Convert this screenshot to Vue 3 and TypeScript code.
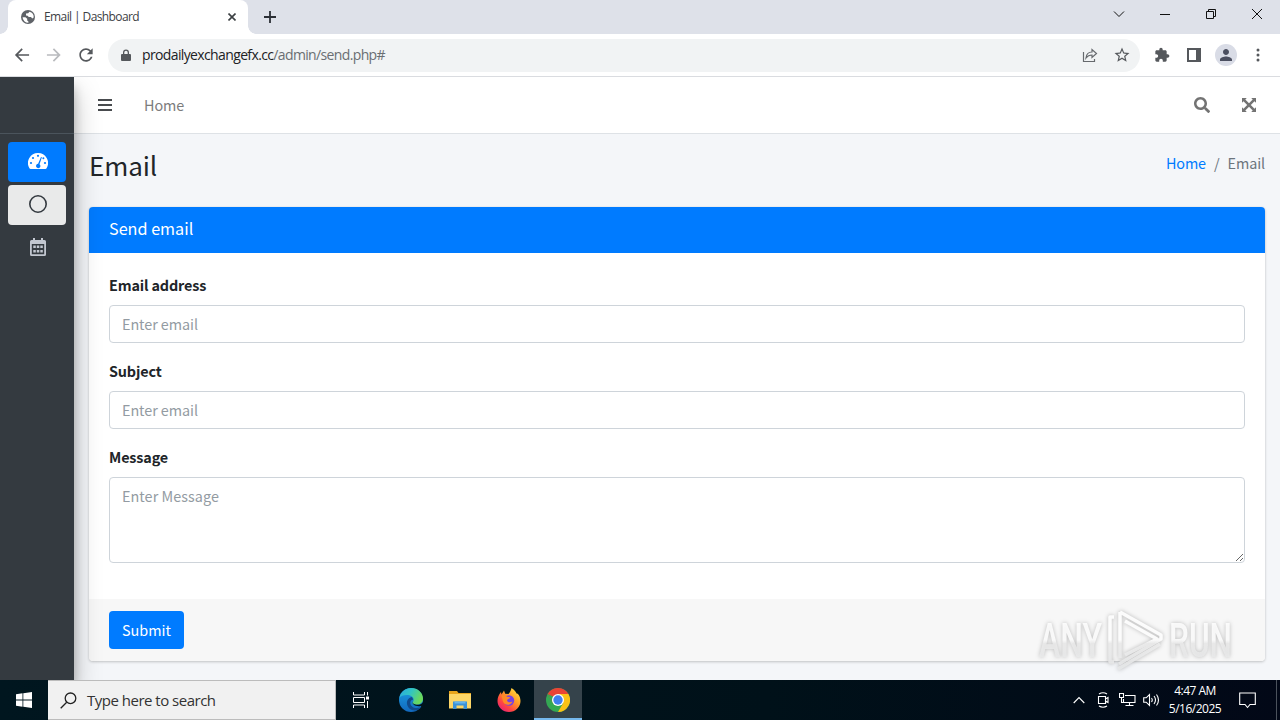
<script setup lang="ts">
interface Field {
  id: string
  label: string
  placeholder: string
  multiline?: boolean
}

const fields: Field[] = [
  { id: 'address', label: 'Email address', placeholder: 'Enter email' },
  { id: 'subject', label: 'Subject', placeholder: 'Enter email' },
  { id: 'message', label: 'Message', placeholder: 'Enter Message', multiline: true },
]
</script>

<template>
  <div class="screen">
    <header class="tabs">
      <div class="tab">
        <svg class="globe" viewBox="0 0 16 16" width="16" height="16">
          <circle cx="8" cy="8" r="7" fill="#5f6368" />
          <path d="M2.600 8.200h2.800l1.800 1.600v1.600l1.200 1v1.400A5.700 5.700 0 0 1 2.600 8.200zM6 4.600l2.200-.4L9.400 2.700a5.600 5.600 0 0 1 4.300 5.800l-1.500 1-1.200-1.500H8.800L7.600 6.700 6 6.500z" fill="#fff" />
        </svg>
        <span class="tab-title">Email | Dashboard</span>
        <svg class="tab-close" viewBox="0 0 8 8" width="8" height="8"><path d="M.5.5l7 7M7.500.5l-7 7" stroke="#3c4043" stroke-width="1.600" /></svg>
      </div>
      <svg class="tab-add" viewBox="0 0 12 12" width="12" height="12"><path d="M6 0v12M0 6h12" stroke="#2b2f36" stroke-width="1.800" /></svg>
      <div class="win-controls">
        <span class="win"><svg viewBox="0 0 12 12" width="12" height="12"><path d="M1 3.500l5 5 5-5" /></svg></span>
        <span class="win"><svg viewBox="0 0 12 12" width="12" height="12"><path d="M1 6.500h10" /></svg></span>
        <span class="win"><svg viewBox="0 0 12 12" width="12" height="12"><path d="M1.500 3.500h7v7h-7zM3.500 3.500v-2h7v7h-2" /></svg></span>
        <span class="win"><svg viewBox="0 0 12 12" width="12" height="12"><path d="M1 1l10 10M11 1L1 11" /></svg></span>
      </div>
    </header>

    <div class="toolbar">
      <span class="tool"><svg viewBox="0 0 24 24" width="20" height="20"><path d="M20.500 11H7.330l5.590-5.590L11.500 4l-8 8 8 8 1.410-1.410L7.330 13H20.500z" /></svg></span>
      <span class="tool dim"><svg viewBox="0 0 24 24" width="20" height="20"><path d="M12 4l-1.410 1.410L16.170 11H3.500v2h12.670l-5.580 5.590L12 20l8-8z" /></svg></span>
      <span class="tool"><svg viewBox="0 0 24 24" width="20" height="20"><path d="M17.650 6.350C16.200 4.900 14.210 4 12 4c-4.420 0-7.990 3.580-7.990 8s3.570 8 7.990 8c3.730 0 6.840-2.550 7.730-6h-2.080c-.82 2.330-3.040 4-5.650 4-3.310 0-6-2.690-6-6s2.690-6 6-6c1.660 0 3.140.69 4.220 1.780L13 11h7V4l-2.350 2.350z" /></svg></span>
      <div class="omnibox">
        <svg class="lock" viewBox="0 0 10 13" width="10" height="13"><path d="M1 5h1V3.500a3 3 0 0 1 6 0V5h1a1 1 0 0 1 1 1v5a1 1 0 0 1-1 1H1a1 1 0 0 1-1-1V6a1 1 0 0 1 1-1zm2.300 0h3.400V3.500a1.700 1.700 0 0 0-3.400 0z" /></svg>
        <div class="url"><span class="host">prodailyexchangefx.cc</span><span class="path">/admin/send.php#</span></div>
        <svg class="share" viewBox="0 0 16 16" width="16" height="16"><path d="M1.500 5v9.500h11V12M4 11c.4-4 2.700-6 6-6V2.500l4.500 4-4.500 4V8C7.500 8 5.600 8.800 4 11z" /></svg>
        <svg class="star" viewBox="0 0 24 24" width="18" height="18"><path d="M22 9.240l-7.190-.62L12 2 9.190 8.630 2 9.240l5.460 4.730L5.820 21 12 17.270 18.180 21l-1.630-7.030L22 9.240zM12 15.400l-3.760 2.270 1-4.280-3.320-2.880 4.380-.38L12 6.100l1.710 4.040 4.380.38-3.320 2.880 1 4.280L12 15.400z" /></svg>
      </div>
      <span class="tool"><svg viewBox="0 0 24 24" width="16" height="16"><path d="M20.500 11H19V7c0-1.100-.9-2-2-2h-4V3.500C13 2.120 11.880 1 10.500 1S8 2.120 8 3.500V5H4c-1.100 0-1.990.9-1.990 2v3.800H3.500c1.490 0 2.700 1.210 2.700 2.700s-1.210 2.700-2.700 2.700H2V20c0 1.100.9 2 2 2h3.800v-1.500c0-1.490 1.210-2.700 2.700-2.700 1.490 0 2.700 1.210 2.700 2.700V22H17c1.100 0 2-.9 2-2v-4h1.500c1.380 0 2.500-1.120 2.500-2.500S21.880 11 20.500 11z" /></svg></span>
      <span class="tool"><svg viewBox="0 0 14 14" width="14" height="14"><path fill-rule="evenodd" d="M0 0h14v14H0zM2 2v10h7V2z" /></svg></span>
      <span class="tool"><span class="avatar"><svg viewBox="0 0 24 24" width="18" height="18"><path d="M12 12c2.210 0 4-1.790 4-4s-1.790-4-4-4-4 1.790-4 4 1.790 4 4 4zm0 2c-2.670 0-8 1.340-8 4v2h16v-2c0-2.660-5.330-4-8-4z" /></svg></span></span>
      <span class="tool"><svg viewBox="0 0 4 14" width="4" height="14"><circle cx="2" cy="2" r="1.500" /><circle cx="2" cy="7" r="1.500" /><circle cx="2" cy="12" r="1.500" /></svg></span>
    </div>

    <div class="page">
      <aside class="sidebar">
        <div class="brand"></div>
        <nav class="side-nav">
          <a class="side-link active">
            <svg viewBox="0 0 20 17" width="20" height="17">
              <path fill="#fff" d="M10 0a10 10 0 0 0-8.700 15c.3.600.7.900 1.300.9h14.800c.6 0 1-.3 1.300-.9A10 10 0 0 0 10 0z" />
              <g fill="#007bff"><circle cx="10" cy="2.800" r="1.100" /><circle cx="5" cy="5" r="1.100" /><circle cx="3" cy="10" r="1.100" /><circle cx="17" cy="10" r="1.100" /><circle cx="15.400" cy="5.200" r="1" /><path d="M13 3.900l.9.400-2.400 6.900a2.200 2.200 0 1 1-1.400-.4z" /></g>
            </svg>
          </a>
          <a class="side-link light"><svg viewBox="0 0 20 20" width="20" height="20"><circle cx="10" cy="10" r="8.200" fill="none" stroke="#343a40" stroke-width="1.600" /></svg></a>
          <a class="side-link">
            <svg viewBox="0 0 16 18" width="16" height="18">
              <path fill="#c2c7d0" fill-rule="evenodd" d="M3 0h2v2h6V0h2v2h1.500A1.500 1.500 0 0 1 16 3.500v13a1.500 1.500 0 0 1-1.500 1.500h-13A1.500 1.500 0 0 1 0 16.500v-13A1.500 1.500 0 0 1 1.500 2H3zM1.800 6v10.200h12.400V6zM3.300 7.500h2.500v2.500H3.300zm3.500 0h2.500v2.500H6.800zm3.500 0h2.500v2.500h-2.500zM3.300 12h2.500v2.500H3.300zM6.800 12h2.500v2.500H6.800zm3.500 0h2.500v2.500h-2.500z" />
            </svg>
          </a>
        </nav>
      </aside>

      <main class="main">
        <div class="navbar">
          <svg class="bars" viewBox="0 0 14 12" width="14" height="12"><path d="M0 1h14M0 6h14M0 11h14" stroke="#484b4e" stroke-width="2" /></svg>
          <a class="nav-home">Home</a>
          <svg class="nav-search" viewBox="0 0 512 512" width="16" height="16"><path d="M505 442.700L405.300 343c-4.500-4.500-10.600-7-17-7H372c27.600-35.300 44-79.700 44-128C416 93.100 322.900 0 208 0S0 93.100 0 208s93.100 208 208 208c48.300 0 92.700-16.400 128-44v16.300c0 6.400 2.500 12.500 7 17l99.700 99.700c9.400 9.400 24.600 9.400 33.900 0l28.300-28.300c9.400-9.400 9.400-24.600.1-34zM208 336c-70.700 0-128-57.200-128-128 0-70.700 57.200-128 128-128 70.700 0 128 57.200 128 128 0 70.700-57.200 128-128 128z" /></svg>
          <svg class="nav-expand" viewBox="0 0 14 14" width="14" height="14"><path d="M0 0h4.800L3.300 1.500 7 5.200l3.700-3.700L9.200 0H14v4.800l-1.500-1.500L8.800 7l3.700 3.700L14 9.200V14H9.200l1.500-1.500L7 8.800l-3.700 3.700L4.800 14H0V9.200l1.500 1.500L5.200 7 1.500 3.300 0 4.800z" /></svg>
        </div>

        <div class="content-head">
          <h1>Email</h1>
          <div class="crumbs"><a>Home</a><span class="slash">/</span><span>Email</span></div>
        </div>

        <section class="card">
          <div class="card-head">Send email</div>
          <form class="card-body" @submit.prevent>
            <div v-for="f in fields" :key="f.id" class="group">
              <label :for="f.id">{{ f.label }}</label>
              <textarea v-if="f.multiline" :id="f.id" class="control area" :placeholder="f.placeholder"></textarea>
              <input v-else :id="f.id" class="control line" type="text" :placeholder="f.placeholder" />
            </div>
          </form>
          <div class="card-foot"><button type="button" class="submit">Submit</button></div>
        </section>
      </main>

      <svg class="watermark" viewBox="0 0 204 66" width="204" height="66">
        <defs>
          <linearGradient id="wmFade" gradientUnits="userSpaceOnUse" x1="0" y1="4" x2="0" y2="62"><stop offset="0" stop-color="#fff" /><stop offset=".5" stop-color="#fff" /><stop offset=".56" stop-color="#ececec" /><stop offset="1" stop-color="#e6e7e8" /></linearGradient>
        </defs>
        <g class="wm-text">
          <text x="4" y="50" textLength="63" lengthAdjust="spacingAndGlyphs">ANY</text>
          <text x="134" y="50" textLength="63" lengthAdjust="spacingAndGlyphs">RUN</text>
        </g>
        <g class="wm-play">
          <path d="M85 5v46M85 5l41 23v4L84 57" />
          <path d="M79 10h-4v45h4M83 62l42-25M90 14l32 18-32 16" />
        </g>
      </svg>
    </div>

    <footer class="taskbar">
      <span class="start"><svg viewBox="0 0 16 16" width="16" height="16"><path fill="#fff" d="M0 2.200l6.500-.9v6.200H0zM7.300 1.200L16 0v7.500H7.300zM0 8.400h6.500v6.300L0 13.800zM7.300 8.400H16V16l-8.700-1.200z" /></svg></span>
      <div class="search">
        <svg viewBox="0 0 17 17" width="17" height="17"><circle cx="10.500" cy="6.300" r="5.300" /><path d="M6.700 10.200L.7 16.300" /></svg>
        <span>Type here to search</span>
      </div>
      <span class="task taskview"><svg viewBox="0 0 17 16" width="17" height="16"><path d="M1.500 0v3h11V0M1.500 16v-3h11v3M1.500 5.500h11v5h-11zM15.500 0v3.500M15.500 9v7" fill="none" stroke="#fff" /><path d="M14 4.500h3v3h-3z" fill="#fff" /></svg></span>
      <span class="task">
        <svg viewBox="0 0 24 24" width="24" height="24">
          <defs>
            <linearGradient id="edgeTop" x1="0" y1="0" x2="1" y2=".4"><stop offset="0" stop-color="#2aa8e0" /><stop offset=".5" stop-color="#31c4c4" /><stop offset="1" stop-color="#6bd95a" /></linearGradient>
            <linearGradient id="edgeLow" x1="0" y1="0" x2="0" y2="1"><stop offset="0" stop-color="#1b9de2" /><stop offset="1" stop-color="#1268bd" /></linearGradient>
          </defs>
          <circle cx="12" cy="12" r="12" fill="url(#edgeLow)" />
          <path d="M.3 10C1.500 4 6.500 0 12.200 0 19 0 24 5 24 10.500c0 4-3 6.200-6.300 6.200-2.500 0-4.300-.8-4.300-1.700 0-.7 1.300-1.300 1.300-3.200C14.700 9 11.500 7 8 7 4.500 7 1.300 8.300.3 10z" fill="url(#edgeTop)" />
          <path d="M12.500 9c-3 1-5 3.500-4.500 7 .5 3.700 4 6.500 8 6.500 2.500 0 4.800-1.300 6.300-3.500-6 2.500-11 0-11-4 0-2 1-3 2.700-3.200 0-1.300-.5-2.200-1.500-2.800z" fill="#114a8b" />
          <path d="M13.500 13.500c-.5 3.300 3 5.300 8.500 4.500l2.500 1v-5.500c-1.500 2.600-4 3.500-6.500 3.300-2.300 0-4.700-1-4.500-3.300z" fill="#00131c" />
        </svg>
      </span>
      <span class="task">
        <svg viewBox="0 0 22 18" width="22" height="18"><path d="M0 0h8l1.500 2H22v4H0z" fill="#e8a51c" /><path d="M0 3h22v14.500H0z" fill="#fcd667" /><path d="M4 10.500h14V18h-3.500v-3.500h-7V18H4z" fill="#3a92d8" /><path d="M5.500 10.500h11v2h-11z" fill="#64b5ee" /></svg>
      </span>
      <span class="task">
        <svg viewBox="0 0 24 24" width="24" height="24">
          <defs><linearGradient id="fox" x1="1" y1="0" x2=".2" y2="1"><stop offset="0" stop-color="#fff04a" /><stop offset=".45" stop-color="#ff9a26" /><stop offset=".75" stop-color="#ff4542" /><stop offset="1" stop-color="#e51f78" /></linearGradient></defs>
          <path d="M14.500 0c3.200 2 4.500 4 5 5.500.8 0 1.500.5 1.500.5 1.700 2 2.500 4.600 2.500 7A11.500 11 0 0 1 12 24 11.500 11 0 0 1 .5 13c0-3.500 1.300-6.500 3.500-9l.5 2.500L7 2.500l1.200 3.300 3.300.2c1-.8 2.300-3.500 3-6z" fill="url(#fox)" />
          <circle cx="12" cy="12.500" r="5.200" fill="#7542e5" /><path d="M4.500 7.500c2-.9 4-.3 5.500 1.300l3.300.4c-.3 1.600-2.800 1.700-3.300 3 .5 2.200 3 2.700 5.500 1.300-1 3.700-7.500 5-9.500 0z" fill="#ff8a25" />
        </svg>
      </span>
      <span class="task current">
        <svg viewBox="0 0 24 24" width="24" height="24">
          <circle cx="12" cy="12" r="12" fill="#34a853" />
          <path d="M12 12L1.600 6A12 12 0 0 1 22.400 6z" fill="#ea4335" />
          <path d="M12 6h10.400A12 12 0 0 1 12 24l5.200-9z" fill="#fbc116" />
          <path d="M1.600 6l5.200 9L12 12V6z" fill="#ea4335" /><path d="M1.600 6l5.200 9 2 2.500L10 10z" fill="#34a853" />
          <circle cx="12" cy="12" r="6" fill="#fff" /><circle cx="12" cy="12" r="4.700" fill="#3f7ff0" />
        </svg>
      </span>
      <div class="tray">
        <span class="tray-item"><svg viewBox="0 0 12 8" width="12" height="8"><path d="M.7 7L6 1.500 11.300 7" /></svg></span>
        <span class="tray-item"><svg viewBox="0 0 12 16" width="12" height="16"><path d="M1.500 4.500h7v7h-7zM8.500 7l2.500-1.500v5L8.500 9M2 2Q6-.5 10 2M2 14Q6 16.500 10 14" /></svg></span>
        <span class="tray-item"><svg viewBox="0 0 17 14" width="17" height="14"><path d="M6 2.500h10v7H4.500V6M10.500 9.500v3M6.500 12.500h8M.5.500h4v4h-4zM2.500 4.500v5h2" /></svg></span>
        <span class="tray-item"><svg viewBox="0 0 17 14" width="17" height="14"><path d="M.7 4.800h2.500L6.500 1.500v11L3.200 9.200H.7zM8.500 5q1.500 2 0 4M11 3q3 4 0 8M13.500 1.500q4 5.500 0 11" /></svg></span>
        <div class="clock"><span>4:47 AM</span><span>5/16/2025</span></div>
        <span class="notify"><svg viewBox="0 0 17 17" width="17" height="17"><path d="M.7 1h15.600v11.500H11l-2.500 3-2.500-3H.7z" /></svg></span>
        <span class="peek"></span>
      </div>
    </footer>
  </div>
</template>

<style>
html, body { margin: 0; overflow: hidden; }
</style>

<style scoped>
* { box-sizing: border-box; }
svg { display: block; flex: none; }
.screen { width: 1280px; height: 720px; display: flex; flex-direction: column; overflow: hidden; background: #f4f6f9; font-family: "Noto Sans CJK JP", "Noto Sans", sans-serif; color: #212529; }

.tabs { height: 34px; flex: none; display: flex; background: #dee1e9; }
.tab { position: relative; width: 240px; height: 34px; margin-left: 8px; padding: 0 12px; display: flex; align-items: center; background: #fff; border-radius: 8px 8px 0 0; }
.tab::before, .tab::after { content: ""; position: absolute; bottom: 0; width: 8px; height: 8px; }
.tab::before { left: -8px; background: radial-gradient(circle at 0 0, transparent 7.500px, #fff 8px); }
.tab::after { right: -8px; background: radial-gradient(circle at 100% 0, transparent 7.500px, #fff 8px); }
.tab-title { flex: 1; margin-left: 8px; font: 12px/16px "Open Sans", "Noto Sans", sans-serif; letter-spacing: -.6px; color: #3c4043; white-space: nowrap; }
.tab-add { margin: 11px 0 0 16px; }
.win-controls { margin-left: auto; height: 28px; display: flex; }
.win { width: 46px; display: grid; place-items: center; }
.win svg { fill: none; stroke: #111; stroke-width: 1; }

.toolbar { height: 43px; flex: none; display: flex; align-items: center; padding: 0 6px; background: #fff; border-bottom: 1px solid #dadce0; }
.tool { width: 32px; height: 32px; flex: none; display: grid; place-items: center; fill: #55585c; }
.dim { fill: #b9bbbe; }
.omnibox { width: 1032px; flex: none; height: 33px; margin: 0 6px; padding: 0 9px 0 13px; display: flex; align-items: center; border-radius: 17px; background: #f1f3f4; }
.lock { fill: #55585c; }
.url { flex: 1; margin-left: 11px; font: 14px/20px "Open Sans", "Noto Sans", sans-serif; white-space: nowrap; color: #202124; }
.host { letter-spacing: -.63px; }
.path { letter-spacing: -.64px; color: #6a6e72; }
.share { fill: none; stroke: #66696d; stroke-width: 1.200; margin-right: 15px; }
.star { fill: #55585c; }
.avatar { width: 22px; height: 22px; display: grid; place-items: center; border-radius: 50%; background: #d9dce6; fill: #4b4f60; }

.page { position: relative; height: 603px; flex: none; display: flex; overflow: hidden; }
.sidebar { position: relative; z-index: 2; width: 74px; flex: none; background: #343a40; box-shadow: 0 14px 28px rgba(0, 0, 0, .25), 0 10px 10px rgba(0, 0, 0, .22); }
.brand { height: 57px; border-bottom: 1px solid #4b545c; }
.side-nav { display: flex; flex-direction: column; gap: 3px; padding: 8px 8px 0; }
.side-link { height: 40px; display: grid; place-items: center; border-radius: 4px; padding: 0 0 2px 2px; }
.active { background: #007bff; }
.light { background: #e9eaea; }

.main { flex: 1; min-width: 0; display: flex; flex-direction: column; }
.navbar { height: 57px; flex: none; display: flex; align-items: center; padding: 0 24px; background: #fff; border-bottom: 1px solid #dee2e6; fill: #737373; }
.nav-home { margin: 0 0 2px 32px; font-size: 14.400px; letter-spacing: -.1px; color: #7c7c7c; }
.nav-search { margin-left: auto; margin-right: 32px; }
.content-head { height: 73px; flex: none; display: flex; justify-content: space-between; padding: 14px 15px 0; }
h1 { margin: 0; font-size: 26px; font-weight: 400; line-height: 34px; letter-spacing: -.1px; }
.crumbs { display: flex; font-size: 14.400px; line-height: 30px; letter-spacing: -.1px; color: #6c757d; }
.crumbs a { color: #007bff; }
.slash { margin: 0 8px; }

.card { margin: 0 15px; border-radius: 4px; background: #fff; box-shadow: 0 0 1px rgba(0, 0, 0, .13), 0 1px 3px rgba(0, 0, 0, .2); }
.card-head { height: 46px; padding: 0 20px; border-radius: 4px 4px 0 0; background: #007bff; color: #fff; font-size: 16.200px; line-height: 42px; }
.card-body { padding: 20px; }
.group { margin-bottom: 16px; display: flex; flex-direction: column; }
label { height: 24px; margin-bottom: 8px; font-size: 14.400px; font-weight: 700; line-height: 23px; letter-spacing: -.15px; }
.control { display: block; width: 100%; height: 38px; margin: 0; padding: 6px 12px; border: 1px solid #ced4da; border-radius: 4px; background: #fff; font-family: inherit; font-size: 14.400px; line-height: 24px; color: #495057; }
.line { padding: 5px 12px 7px; letter-spacing: -.07px; }
.control::placeholder { color: #939ba2; opacity: 1; }
.area { height: 86px; resize: vertical; letter-spacing: .05px; }
.card-foot { height: 62px; padding: 12px 20px; border-radius: 0 0 4px 4px; background: #f7f7f7; }
.submit { width: 75px; height: 38px; padding: 0; border: 0; border-radius: 4px; background: #007bff; color: #fff; font-family: inherit; font-size: 14.400px; line-height: 38px; }

.watermark { position: absolute; left: 1035px; top: 530px; z-index: 3; overflow: visible; filter: drop-shadow(0 0 2px rgba(0, 0, 0, .28)); }
.wm-text { font: 500 48px "Roboto", sans-serif; fill: url(#wmFade); opacity: .85; }
.wm-play { fill: none; stroke: url(#wmFade); stroke-width: 3.500; stroke-linejoin: round; opacity: .9; }

.taskbar { height: 40px; flex: none; display: flex; background: linear-gradient(90deg, #00161f, #001119 60%, #020817); color: #fff; font-family: "Open Sans", "Noto Sans", sans-serif; }
.start { width: 48px; display: grid; place-items: center; }
.search { width: 288px; display: flex; align-items: center; padding-left: 12px; background: #f1f1f1; border: 1px solid #bcbcbc; border-left: 0; color: #333; }
.search svg { fill: none; stroke: #222; stroke-width: 1.300; }
.search span { margin-left: 10px; font-size: 15px; letter-spacing: -.5px; }
.task { width: 48px; margin-right: 1px; display: grid; place-items: center; }
.taskview { margin-right: 3px; }
.current { background: #35434b; border-bottom: 2px solid #76b9ed; padding-top: 2px; }
.tray { margin-left: auto; display: flex; }
.tray-item { width: 24px; display: grid; place-items: center; }
.tray svg { fill: none; stroke: #fff; stroke-width: 1.100; }
.clock { width: 64px; display: flex; flex-direction: column; align-items: center; padding-top: 2px; font-size: 12px; line-height: 18px; letter-spacing: -.5px; white-space: nowrap; }
.notify { width: 40px; display: grid; place-items: center; }
.peek { width: 4px; margin-left: 9px; border-left: 1px solid #4b525c; }
</style>
